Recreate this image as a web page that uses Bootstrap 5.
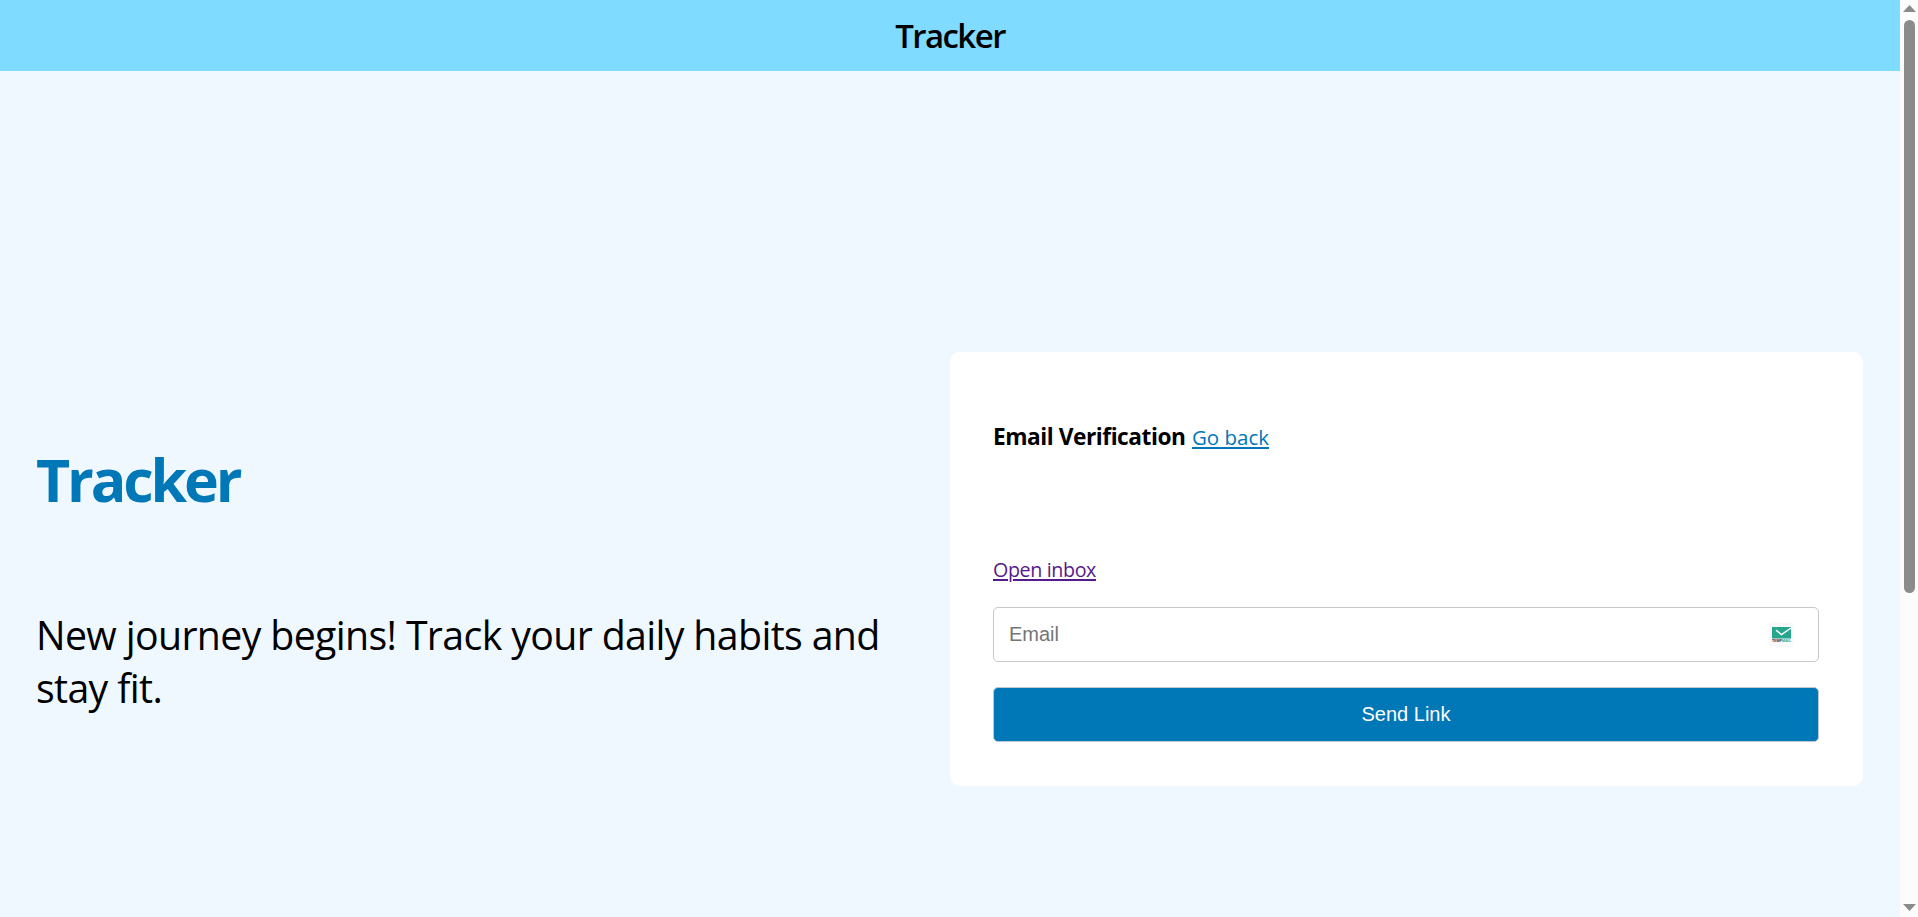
<!DOCTYPE html>
<html lang="en">
<head>
<meta charset="utf-8">
<meta name="viewport" content="width=device-width, initial-scale=1">
<title>Tracker</title>
<link rel="stylesheet" href="https://cdn.jsdelivr.net/npm/bootstrap@5.3.0/dist/css/bootstrap.min.css">
<style>
body{font-family:"Open Sans","Noto Sans",sans-serif;background:#f0f8ff;color:#000}
.shell{height:917px}
.topbar{height:71px;background:#7fdbff}
.brand{font-size:33px;line-height:45px;font-weight:600;letter-spacing:-1.55px;margin-top:-1px}
.stage{padding:281px 37px 0}
.intro{padding-top:87px}
.intro h1{font-size:59px;line-height:80px;font-weight:700;letter-spacing:-3.1px;color:#0077b6;margin:0 0 90px -1px}
.intro p{font-size:39.3px;line-height:53px;letter-spacing:-.65px;margin:0 0 0 -1px}
.panel{height:434px;background:#fff;border-radius:10px;padding:70px 44px 0 43px}
.heading{font-size:22.7px;line-height:30px;font-weight:700;letter-spacing:-.45px;margin:0 0 104px}
.heading a{font-size:20.5px;font-weight:500;letter-spacing:0;color:#0077b6;margin-left:1px}
.inbox{font-size:19.7px;line-height:27px;letter-spacing:-.38px;margin:0 0 24px}
.inbox a{color:#551a8b}
.heading a,.inbox a{text-decoration-thickness:2px;text-underline-offset:2px}
.field,.send{height:55px;border:1px solid #c8c8c8;border-radius:5px;font:20px/26px "Liberation Sans",Arial,sans-serif}
.field{padding:0 15px;margin-bottom:25px}
.field::placeholder{color:#757575}
.send,.send:hover{background:#0077b6;color:#fff;border-color:#bcc9d0;padding:0 0 2px}
.mailicon{right:25px;top:15px}
.scroll{width:18px;background:#fcfcfc;padding:5px 0 6px}
.thumb{width:11px;height:573px;border-radius:6px;background:#8b8b8b;margin-top:8px}
</style>
</head>
<body class="overflow-hidden">
<div class="shell d-flex">
<div class="flex-grow-1">
<header class="topbar d-flex align-items-center justify-content-center"><span class="brand">Tracker</span></header>
<main class="stage row g-0">
<section class="intro col-6"><h1>Tracker</h1><p>New journey begins! Track your daily habits and<br>stay fit.</p></section>
<section class="col-6"><div class="panel">
<h2 class="heading">Email Verification <a href="#">Go back</a></h2>
<p class="inbox"><a href="#">Open inbox</a></p>
<form>
<div class="position-relative"><input class="form-control field" type="email" placeholder="Email" aria-label="Email">
<svg class="mailicon position-absolute" width="25" height="25" viewBox="0 0 25 25"><rect width="25" height="25" rx="3" fill="#fafafa"/><rect x="3" y="5" width="19" height="11.5" fill="#26a68d"/><path d="M7 8.2l5.5 4.3L22 6" fill="none" stroke="#fff" stroke-width="1.5"/><text x="3" y="19.8" font-size="3.6" font-weight="700" textLength="19" lengthAdjust="spacingAndGlyphs" fill="#1d2b50">TEMP<tspan fill="#26a68d">MAIL</tspan></text></svg></div>
<button class="btn send w-100" type="button">Send Link</button>
</form></div></section>
</main>
</div>
<div class="scroll d-flex flex-column align-items-center flex-shrink-0">
<svg width="13" height="7" viewBox="0 0 13 7"><path d="M6.5 0L13 7H0z" fill="#8b8b8b"/></svg>
<div class="thumb"></div>
<svg class="mt-auto" width="13" height="7" viewBox="0 0 13 7"><path d="M6.5 7L13 0H0z" fill="#8b8b8b"/></svg>
</div>
</div>
<script src="https://cdn.jsdelivr.net/npm/bootstrap@5.3.0/dist/js/bootstrap.bundle.min.js"></script>
</body>
</html>
